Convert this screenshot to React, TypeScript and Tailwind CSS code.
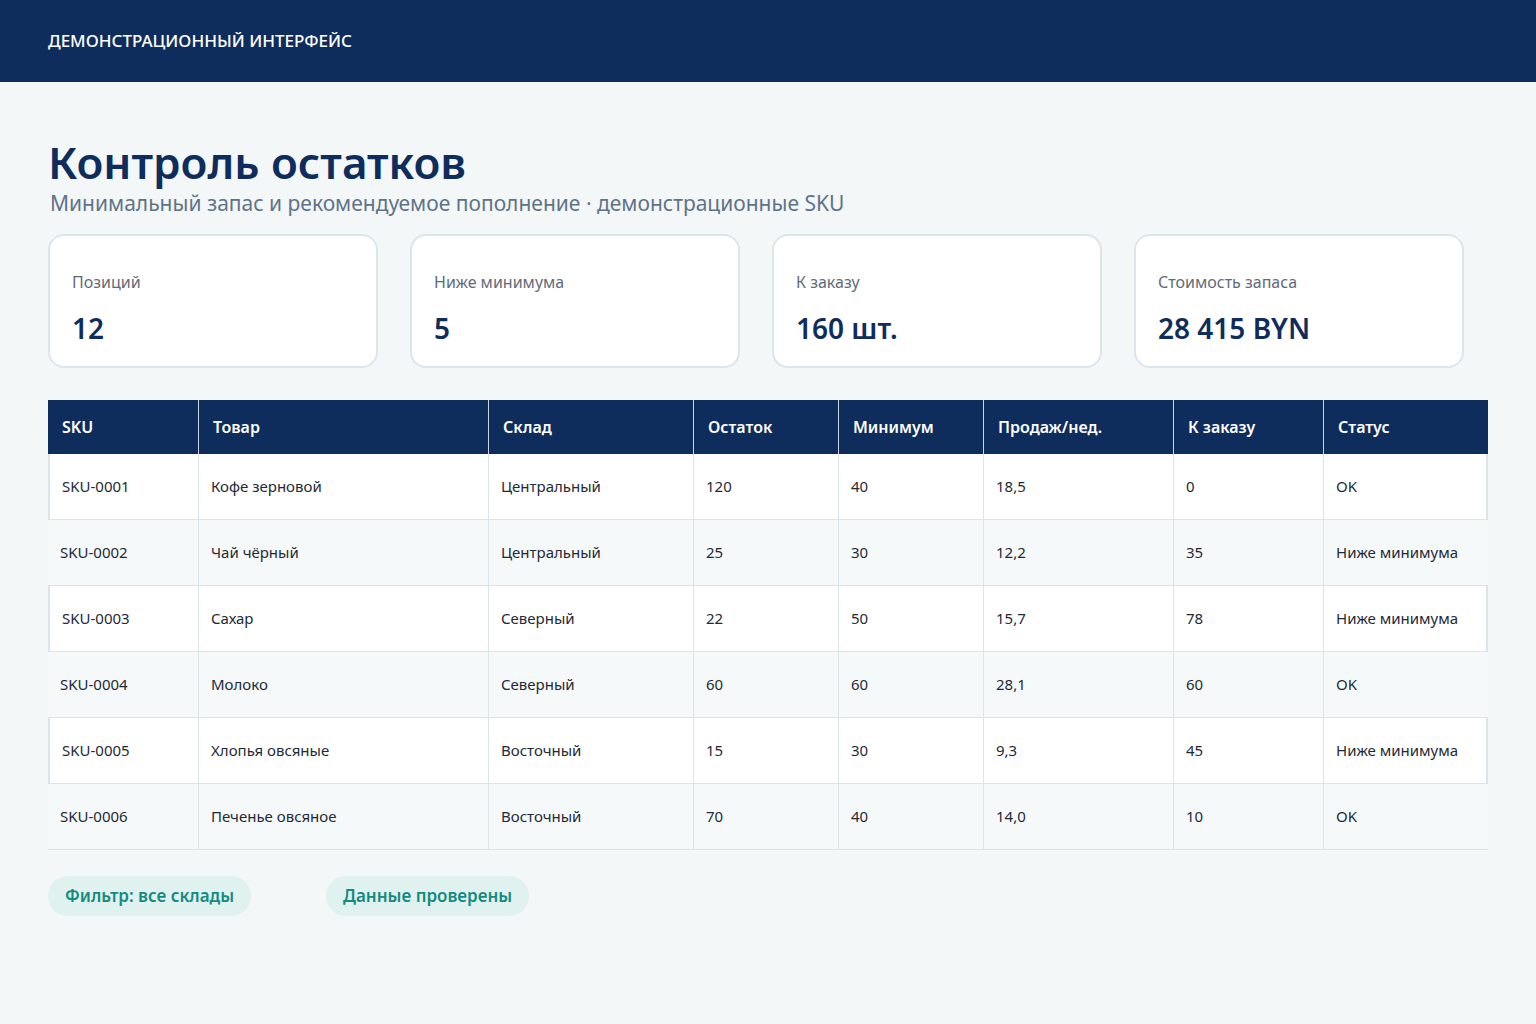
const cols = [150, 290, 205, 145, 145, 190, 150, 165];
const heads = ["SKU", "Товар", "Склад", "Остаток", "Минимум", "Продаж/нед.", "К заказу", "Статус"];
const rows = [
  ["SKU-0001", "Кофе зерновой", "Центральный", "120", "40", "18,5", "0", "OK"],
  ["SKU-0002", "Чай чёрный", "Центральный", "25", "30", "12,2", "35", "Ниже минимума"],
  ["SKU-0003", "Сахар", "Северный", "22", "50", "15,7", "78", "Ниже минимума"],
  ["SKU-0004", "Молоко", "Северный", "60", "60", "28,1", "60", "OK"],
  ["SKU-0005", "Хлопья овсяные", "Восточный", "15", "30", "9,3", "45", "Ниже минимума"],
  ["SKU-0006", "Печенье овсяное", "Восточный", "70", "40", "14,0", "10", "OK"],
];
const cards = [
  ["Позиций", "12"],
  ["Ниже минимума", "5"],
  ["К заказу", "160 шт."],
  ["Стоимость запаса", "28 415 BYN"],
];
export default function App() {
  return (
    <div className="min-h-[1024px] bg-[#f3f7f8] font-['Noto_Sans',sans-serif]">
      <div className="h-[82px] bg-[#0f2d5c] flex items-center px-12 text-white text-[17px] font-medium">
        ДЕМОНСТРАЦИОННЫЙ ИНТЕРФЕЙС
      </div>
      <div className="px-12">
        <h1 className="mt-[50px] text-[44px] leading-[60px] font-semibold text-[#0f2d5c]">Контроль остатков</h1>
        <div className="mt-[-4px] ml-[2px] text-[21px] leading-[30px] text-[#5f7387]">
          Минимальный запас и рекомендуемое пополнение · демонстрационные SKU
        </div>
        <div className="mt-[16px] flex gap-[32px]">
          {cards.map(([l, v]) => (
            <div key={l} className="w-[330px] h-[134px] bg-white border-2 border-[#dde5ec] rounded-[16px] px-[22px] pt-[34px]">
              <div className="text-[16px] text-[#5f6b78] leading-[24px]">{l}</div>
              <div className="mt-[16px] text-[28px] leading-[36px] font-semibold text-[#0f2d5c]">{v}</div>
            </div>
          ))}
        </div>
        <div className="mt-[32px] w-[1440px]">
          <div className="flex h-[54px] bg-[#0f2d5c] text-white text-[16px] font-semibold">
            {heads.map((h, i) => (
              <div key={h} style={{ width: cols[i] }} className={`flex items-center px-[14px] ${i > 0 ? "border-l border-[#c9d6e3]" : ""}`}>{h}</div>
            ))}
          </div>
          {rows.map((r, ri) => (
            <div key={ri} className={`flex h-[66px] text-[15px] text-[#1f2a36] border-b border-[#dbe4ea] ${ri % 2 === 0 ? "bg-white border-x-2 border-x-[#dbe4ea]" : "bg-[#f6f9fa]"}`}>
              {r.map((c, i) => (
                <div key={i} style={{ width: cols[i] - (ri % 2 === 0 && (i === 0 || i === 7) ? 2 : 0) }} className={`flex items-center px-[12px] ${i > 0 ? "border-l border-[#dbe4ea]" : ""}`}>{c}</div>
              ))}
            </div>
          ))}
        </div>
        <div className="mt-[26px] flex gap-[75px]">
          <div className="h-[40px] px-[17px] rounded-full bg-[#dff2ef] text-[#168a80] text-[17px] font-semibold flex items-center">Фильтр: все склады</div>
          <div className="h-[40px] px-[17px] rounded-full bg-[#dff2ef] text-[#168a80] text-[17px] font-semibold flex items-center">Данные проверены</div>
        </div>
      </div>
    </div>
  );
}
